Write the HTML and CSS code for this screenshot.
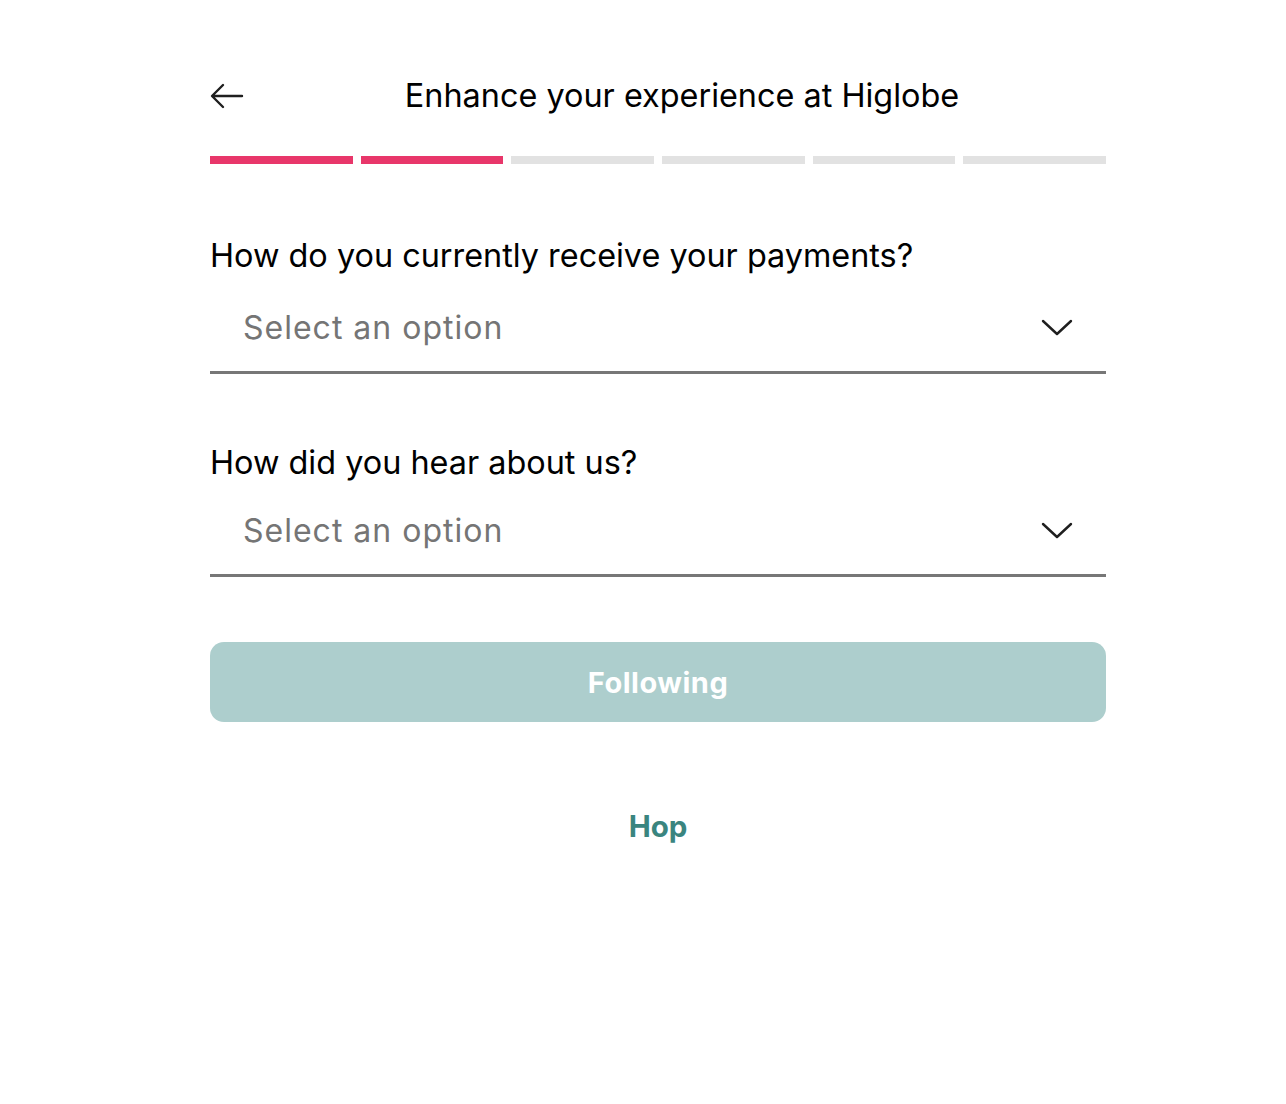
FILE: index.html
```html
<!DOCTYPE html>
<html lang="en">
<head>
<meta charset="utf-8">
<title>Enhance your experience at Higlobe</title>
<link rel="stylesheet" href="styles.css">
</head>
<body>
<main class="page">
  <header class="header">
    <button class="back" aria-label="Back">
      <svg width="34" height="26" viewBox="0 0 34 26" fill="none" stroke="#1f1f1f" stroke-width="2.4" stroke-linecap="round" stroke-linejoin="round"><path d="M32 13H3M13 2L2 13l11 11"/></svg>
    </button>
    <h1 class="title">Enhance your experience at Higlobe</h1>
  </header>
  <div class="progress">
    <span class="seg on"></span><span class="seg on"></span><span class="seg"></span><span class="seg"></span><span class="seg"></span><span class="seg"></span>
  </div>
  <div class="field first">
    <label class="label">How do you currently receive your payments?</label>
    <div class="select">
      <span class="placeholder">Select an option</span>
      <svg class="chev" width="32" height="18" viewBox="0 0 32 18" fill="none" stroke="#1f1f1f" stroke-width="2.4" stroke-linecap="round" stroke-linejoin="round"><path d="M2 2l14 13L30 2"/></svg>
    </div>
  </div>
  <div class="field second">
    <label class="label">How did you hear about us?</label>
    <div class="select">
      <span class="placeholder">Select an option</span>
      <svg class="chev" width="32" height="18" viewBox="0 0 32 18" fill="none" stroke="#1f1f1f" stroke-width="2.4" stroke-linecap="round" stroke-linejoin="round"><path d="M2 2l14 13L30 2"/></svg>
    </div>
  </div>
  <button class="next">Following</button>
  <div class="skip"><a class="hop">Hop</a></div>
</main>
</body>
</html>
```
FILE: styles.css
```css
* { box-sizing: border-box; }
body { margin: 0; background: #fff; font-family: Inter, "Noto Sans", sans-serif; color: #000; }
.page { width: 896px; margin-left: 210px; padding-top: 64px; }
.header { display: flex; align-items: center; height: 64px; }
.back { width: 48px; height: 64px; padding: 0; border: 0; background: none; display: flex; align-items: center; justify-content: flex-start; cursor: pointer; }
.title { flex: 1; margin: 0; text-align: center; font-size: 32.4px; font-weight: 400; line-height: 36px; }
.progress { display: grid; grid-template-columns: repeat(6, 1fr); gap: 8px; margin-top: 28px; }
.seg { height: 8px; background: #e2e2e2; }
.seg.on { background: #e8366a; }
.field { display: flex; flex-direction: column; }
.field.first { margin-top: 74px; }
.field.second { margin-top: 71px; }
.label { font-size: 32.4px; line-height: 36px; }
.select { display: flex; align-items: center; justify-content: space-between; padding: 36px 33px 25px 33px; border-bottom: 3px solid #777; }
.second .select { padding-top: 32px; }
.placeholder { font-size: 32px; line-height: 36px; color: #757575; letter-spacing: 1px; }
.chev { display: block; }
.next { margin-top: 65px; width: 100%; height: 80px; border: 0; border-radius: 14px; background: #adcecd; color: #fff; font-family: Inter, "Noto Sans", sans-serif; font-size: 29px; font-weight: 700; letter-spacing: 0.5px; }
.skip { margin-top: 86px; text-align: center; }
.hop { font-size: 29.5px; font-weight: 700; line-height: 36px; color: #3a857f; }
```
